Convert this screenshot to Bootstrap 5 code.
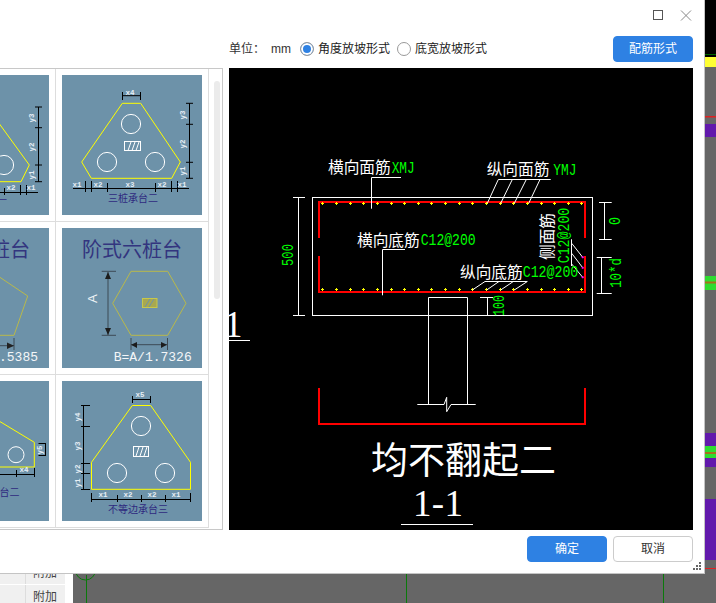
<!DOCTYPE html>
<html lang="zh">
<head>
<meta charset="utf-8">
<title>配筋形式</title>
<link rel="stylesheet" href="https://cdn.jsdelivr.net/npm/bootstrap@5.3.0/dist/css/bootstrap.min.css">
<style>
html,body{width:716px;height:603px;margin:0;overflow:hidden;background:#666}
body{font-family:"Liberation Sans","Noto Sans CJK SC",sans-serif;font-size:12px;color:#333}
.desk{width:716px;height:603px;position:relative}
.side{width:65px;padding-top:561px;background:#f0f0f0;flex:none}
.side-row{height:24px}
.side-row:first-child{height:24px;border-bottom:1px solid #fff}
.side-name{width:26px;border-right:1px solid #ddd}
.side-val{flex:1;text-align:right;padding-right:8px;line-height:24px;color:#444}
.side-gap{width:8px;background:#fff;flex:none}
.canvas-bg{display:block;flex:none}
.win{position:absolute;left:0;top:0;width:705px;height:574px;background:#fff;border-right:1px solid #c4c4c4;border-bottom:1px solid #c4c4c4}
.win-top{height:36px;padding:10px 12px 0 0;gap:16px;flex:none}
.win-tools{height:26px;margin-bottom:6px;padding-left:229px;padding-right:11px;flex:none}
.unit-label{width:42px}
.unit-val{width:29px}
.radio-dot.form-check-input{width:14px;height:14px;margin:0 4px 0 0;flex:none;border-color:#999}
.radio-dot.form-check-input:checked{background-color:#2e81e3;border-color:#999;--bs-form-check-bg-image:none;box-shadow:inset 0 0 0 2px #fff}
.radio-item{margin-right:7px;margin-top:-1px;color:#222}
.btn.act-btn{width:80px;height:26px;padding:0;font-size:12px;border-radius:4px;background:#2e81e3;border:1px solid #2e81e3;color:#fff}
.btn.plain-btn{width:80px;height:26px;padding:0;font-size:12px;border-radius:4px;background:#fff;border:1px solid #ccc;color:#333}
.win-main{height:462px;gap:6px;padding-right:11px;flex:none}
.pick{width:223px;height:462px;border:1px solid #c8c8c8;border-left:0;flex:none;overflow:hidden}
.pick-view{width:209px;overflow:hidden;flex:none;height:460px}
.pick-grid{display:grid;grid-template-columns:153px 153px;margin-left:-97px;width:306px}
.pick-cell{height:153px;padding:6px;border-right:1px solid #ddd;border-bottom:1px solid #ddd}
.pick-cell svg{display:block;width:140px;height:140px;background:#6d92a9}
.pick-track{flex:1;padding:12px 2px 0 5px}
.pick-thumb{height:218px;background:#ebebeb;border-radius:3px;width:6px}
.cad{display:block;width:464px;height:462px;background:#000;flex:none}
.win-foot{height:43px;padding:6px 11px 0 0;gap:6px;position:relative;flex:none}
.grip{position:absolute;right:3px;bottom:3px;display:block}
.dim{stroke:#000;stroke-width:1;fill:none}
.yel{stroke:#ff0;stroke-width:1;fill:none}
.wh{stroke:#fff;stroke-width:1;fill:none}
.lbl{font-family:"Liberation Mono",monospace;font-size:7.5px;font-weight:700;fill:#e6eef5;text-anchor:middle}
.tname{font-family:"Noto Sans CJK SC",sans-serif;font-size:10px;fill:#2f2a80}
.tbig{font-family:"Noto Sans CJK SC",sans-serif;font-size:20px;fill:#33357f}
.tformula{font-family:"Liberation Mono",monospace;font-size:13px;fill:#f4f6f8}
.cn{font-family:"Noto Sans CJK SC",sans-serif;font-size:15.7px;fill:#fff}
.gr{font-family:"Liberation Mono",monospace;font-size:16px;fill:#0f0}
.cl{stroke:#fff;stroke-width:1;fill:none}
.re{stroke:#f00;stroke-width:2;fill:none}
</style>
</head>
<body>
<div class="desk d-flex">
  <div class="side">
    <div class="side-row d-flex"><div class="side-name"></div><div class="side-val">附加</div></div>
    <div class="side-row d-flex"><div class="side-name"></div><div class="side-val">附加</div></div>
  </div>
  <div class="side-gap"></div>
  <svg class="canvas-bg" width="643" height="603" viewBox="73 0 643 603">
    <rect x="73" y="0" width="643" height="603" fill="#666"/>
    <rect x="705" y="0" width="11" height="54" fill="#000"/>
    <rect x="705" y="54" width="11" height="1" fill="#060"/>
    <rect x="705" y="55" width="11" height="2" fill="#000"/>
    <rect x="705" y="57" width="11" height="10" fill="#ff3"/>
    <rect x="705" y="116" width="11" height="1.5" fill="#e02020"/>
    <rect x="705" y="124" width="11" height="13" fill="#6219ac"/>
    <rect x="705" y="276" width="11" height="14" fill="#2fdc30"/>
    <rect x="705" y="281.5" width="11" height="2" fill="#a8701c"/>
    <rect x="705" y="433" width="11" height="13" fill="#6219ac"/>
    <rect x="705" y="446" width="11" height="12" fill="#2fdc30"/>
    <rect x="705" y="452" width="11" height="2" fill="#a8701c"/>
    <rect x="705" y="458" width="11" height="9" fill="#6219ac"/>
    <rect x="705" y="499" width="11" height="61" fill="#6219ac"/>
    <rect x="705" y="568" width="11" height="1" fill="#e02020"/>
    <path d="M406.5 560V603M663.5 560V603M86.5 575V603" stroke="#0a7a0a" fill="none"/>
    <path d="M75.500 570a10 10 0 0 0 20 0" stroke="#0a7a0a" fill="none"/>
  </svg>

  <div class="win d-flex flex-column">
    <div class="win-top d-flex justify-content-end align-items-start">
      <svg width="11" height="11" viewBox="0 0 11 11" aria-label="最大化"><rect x=".5" y=".5" width="9" height="9" fill="none" stroke="#555"/></svg>
      <svg width="12" height="11" viewBox="0 0 12 11" aria-label="关闭"><path d="M1 .5 11 10.500M11 .5 1 10.500" fill="none" stroke="#888"/></svg>
    </div>
    <div class="win-tools d-flex align-items-center">
      <span class="unit-label">单位：</span>
      <span class="unit-val">mm</span>
      <label class="radio-item d-flex align-items-center"><input class="form-check-input radio-dot" type="radio" name="slope" checked>角度放坡形式</label>
      <label class="radio-item d-flex align-items-center"><input class="form-check-input radio-dot" type="radio" name="slope">底宽放坡形式</label>
      <button class="btn act-btn ms-auto" type="button">配筋形式</button>
    </div>
    <div class="win-main d-flex">
      <div class="pick d-flex">
        <div class="pick-view">
          <div class="pick-grid">
            <div class="pick-cell">
              <svg viewBox="0 0 140 140"><g transform="translate(91,-75)">
                <path class="yel" d="M-1 123.300 29.300 165 21 181.700H-1"/>
                <circle class="wh" cx="4" cy="165" r="9.600"/>
                <path class="dim" d="M38.500 107V181.700M35 107H42M35 127.700H42M35 165H42M35 181.700H42M-1 192.500H38M4.500 188V195M20.500 185V195M26.500 185V195"/>
                <text class="lbl" transform="translate(34,118) rotate(-90)">y3</text>
                <text class="lbl" transform="translate(34,147) rotate(-90)">y2</text>
                <text class="lbl" transform="translate(34,175) rotate(-90)">y1</text>
                <text class="lbl" x="11" y="190">x2</text><text class="lbl" x="31" y="190">x1</text>
                <text class="tname" x="7" y="204" text-anchor="end">三桩承台一</text>
              </g></svg>
            </div>
            <div class="pick-cell">
              <svg viewBox="0 0 140 140"><g transform="translate(-62,-75)">
                <path class="yel" d="M122.300 103.300H140.700L180.300 162 171.700 178.300H91.300L81.700 162Z"/>
                <circle class="wh" cx="131" cy="124" r="9.600"/><circle class="wh" cx="107" cy="162" r="9.600"/><circle class="wh" cx="155" cy="162" r="9.600"/>
                <rect class="wh" x="124.500" y="141.500" width="16" height="9"/>
                <path class="wh" d="M128 150.500 131 142M132 150.500 135 142M136 150.500 139 142"/>
                <path class="dim" d="M122.500 95.700H140.500M122.500 92V100M140.500 92V100M189.500 103.300V178.300M186 103.300H193M186 124.300H193M186 162.300H193M186 178.300H193M73 188.500H189M85.500 181V192M91.500 181V192M107.500 183V192M155.500 183V192M171.500 181V192M177.500 181V192"/>
                <text class="lbl" x="130" y="95">x4</text>
                <text class="lbl" transform="translate(185,115) rotate(-90)">y3</text>
                <text class="lbl" transform="translate(185,144) rotate(-90)">y2</text>
                <text class="lbl" transform="translate(185,171) rotate(-90)">y1</text>
                <text class="lbl" x="77" y="187">x1</text><text class="lbl" x="98" y="187">x2</text><text class="lbl" x="130" y="187">x3</text><text class="lbl" x="162" y="187">x2</text><text class="lbl" x="182" y="187">x1</text>
                <text class="tname" x="133" y="202" text-anchor="middle">三桩承台二</text>
              </g></svg>
            </div>
            <div class="pick-cell">
              <svg viewBox="0 0 140 140"><g transform="translate(91,-228)">
                <text class="tbig" x="30" y="257" text-anchor="end">阶式五桩台</text>
                <path d="M-1 276.700 27.700 296 14 335.300H-1" fill="none" stroke="#b9b94a"/>
                <path d="M-1 345.700H14M14 338V350" fill="none" stroke="#3d4a55"/>
                <path d="M7 342.500 14 345.700 7 349Z" fill="#222"/>
                <text class="tformula" x="38" y="360.700" text-anchor="end">B=A/1.5385</text>
              </g></svg>
            </div>
            <div class="pick-cell">
              <svg viewBox="0 0 140 140"><g transform="translate(-62,-228)">
                <text class="tbig" x="132" y="257" text-anchor="middle">阶式六桩台</text>
                <path d="M131 271.300H167.700L186 303.300 167.700 335.300H131L112.700 303.300Z" fill="none" stroke="#b9b94a"/>
                <rect x="142.500" y="298.500" width="14.500" height="9" fill="#a8a850" stroke="#c8c84a"/>
                <path d="M145 307 150 299M149 307 154 299" stroke="#6d92a9"/>
                <path d="M108 272V335M101.700 271.300H116M101.700 335.300H116M131 338V350M167.500 338V350M131 344.700H167" fill="none" stroke="#3d4a55"/>
                <path d="M108 272 105 279H111ZM108 335 105 328H111ZM131 344.700 137 342V348ZM167 344.700 161 342V348Z" fill="#1c1c1c"/>
                <text font-family="Liberation Sans" font-size="13" fill="#eef2f5" transform="translate(97,303) rotate(-90)">A</text>
                <text class="tformula" x="152.700" y="360.700" text-anchor="middle">B=A/1.7326</text>
              </g></svg>
            </div>
            <div class="pick-cell">
              <svg viewBox="0 0 140 140"><g transform="translate(91,-381)">
                <path class="yel" d="M-1 421 34.300 442.300V467H-1"/>
                <circle class="wh" cx="16" cy="454.700" r="8"/>
                <path class="dim" d="M45.500 443.300V455.700M38.500 443.500H46M38.500 455.500H46M-1 474.500H34.500M16.500 470V477M34.500 468V477"/>
                <text class="lbl" transform="translate(42,450) rotate(-90)">y5</text>
                <text class="lbl" x="24" y="472">x4</text>
                <text class="tname" x="19.500" y="495.500" text-anchor="end">不等边承台二</text>
              </g></svg>
            </div>
            <div class="pick-cell">
              <svg viewBox="0 0 140 140"><g transform="translate(-62,-381)">
                <path class="yel" d="M132.300 405.500H150.700L190.500 462.300V489.300H91.500V462.300Z"/>
                <circle class="wh" cx="141" cy="426" r="9.600"/><circle class="wh" cx="117" cy="473" r="9.600"/><circle class="wh" cx="165" cy="473" r="9.600"/>
                <rect class="wh" x="133.500" y="446.500" width="15" height="10"/>
                <path class="wh" d="M136 456 139 447M140 456 143 447M144 456 147 447"/>
                <path class="dim" d="M132.500 399.500H150.500M132.500 396V403M150.500 396V403M83.500 405V489M81 405.500H90M81 426.500H90M81 463.500H90M81 473.500H90M81 489.500H90M91.500 499.500H190.500M91.500 493V502M117.500 495V502M141.500 495V502M165.500 495V502M190.500 493V502"/>
                <text class="lbl" x="140" y="397">x5</text>
                <text class="lbl" transform="translate(80,417) rotate(-90)">y4</text>
                <text class="lbl" transform="translate(80,446) rotate(-90)">y3</text>
                <text class="lbl" transform="translate(80,469) rotate(-90)">y2</text>
                <text class="lbl" transform="translate(80,483) rotate(-90)">y1</text>
                <text class="lbl" x="103" y="497">x1</text><text class="lbl" x="128" y="497">x2</text><text class="lbl" x="152" y="497">x2</text><text class="lbl" x="176" y="497">x1</text>
                <text class="tname" x="138" y="513" text-anchor="middle">不等边承台三</text>
              </g></svg>
            </div>
          </div>
        </div>
        <div class="pick-track"><div class="pick-thumb"></div></div>
      </div>

      <svg class="cad" viewBox="229 68 464 462">
        <defs>
          <path id="dotrow" transform="translate(.2,.2)" stroke-linecap="square" d="M321.300 203.300h2M322.300 202.300v2M335.300 203.300h2M336.300 202.300v2M349.300 203.300h2M350.300 202.300v2M362.300 203.300h2M363.300 202.300v2M376.300 203.300h2M377.300 202.300v2M390.300 203.300h2M391.300 202.300v2M403.300 203.300h2M404.300 202.300v2M417.300 203.300h2M418.300 202.300v2M430.300 203.300h2M431.300 202.300v2M444.300 203.300h2M445.300 202.300v2M458.300 203.300h2M459.300 202.300v2M471.300 203.300h2M472.300 202.300v2M485.300 203.300h2M486.300 202.300v2M499.300 203.300h2M500.300 202.300v2M512.300 203.300h2M513.300 202.300v2M526.300 203.300h2M527.300 202.300v2M540.300 203.300h2M541.300 202.300v2M553.300 203.300h2M554.300 202.300v2M567.300 203.300h2M568.300 202.300v2M580.300 203.300h2M581.300 202.300v2" stroke="#ff0" fill="none"/>
        </defs>
        <rect class="cl" x="312.500" y="197.500" width="280" height="118"/>
        <path class="re" d="M319 238V202H585V238M319 256V292H585V256"/>
        <use href="#dotrow"/><use href="#dotrow" y="86"/>
        <path class="cl" d="M428.500 315.500V297.500H467.500V404.500M428.500 315.500V404.500M417.300 404.500H444L446.700 397.300V411.700L451 404.500H475.700"/>
        <path class="re" d="M319 388V424H585V388"/>
        <!-- 尺寸 -->
        <path class="cl" d="M298.500 197V315M293 197.500H305M293 315.500H305M604.500 202V239M599 202.500H611.700M599 239.500H611.700M601.500 257V293M596.700 257.500H611.700M596.700 293.500H611.700M487.500 297V315M480 297.500H493M480 315.500H493"/>
        <text class="gr" transform="translate(293.300,266) rotate(-90)" textLength="22" lengthAdjust="spacingAndGlyphs">500</text>
        <text class="gr" transform="translate(620,225) rotate(-90)" textLength="8" lengthAdjust="spacingAndGlyphs">0</text>
        <text class="gr" transform="translate(620.700,288) rotate(-90)" textLength="30" lengthAdjust="spacingAndGlyphs">10*d</text>
        <text class="gr" transform="translate(504,316) rotate(-90)" textLength="21" lengthAdjust="spacingAndGlyphs">100</text>
        <!-- 引线 -->
        <path class="cl" d="M401 177.500H371.500V208.700M405 249.500H382.500V295.300M498.300 179.500H550.700M498.300 179.500 487.300 203.300M512.300 179.500 500.700 203.300M526.300 179.500 514.300 203.300M540 179.500 528.700 203.300M485 281.500H527.300M485 281.500 472.300 290M499 281.500 486.700 290M513.300 281.500 500.700 290M527.300 281.500 514.300 290M571.500 239.300V266M571.700 243.300 582.700 257.300M571.700 253.300 582.700 267.700M571.700 264 582.700 277.300"/>
        <path d="M581.700 257.300h2M582.700 256.300v2M581.700 267.700h2M582.700 266.700v2M581.700 277.300h2M582.700 276.300v2" stroke="#f0f" stroke-width="1.500" fill="none"/>
        <!-- 文字 -->
        <text class="cn" x="328" y="172.500">横向面筋</text><text class="gr" x="391.700" y="173.300" textLength="23" lengthAdjust="spacingAndGlyphs">XMJ</text>
        <text class="cn" x="357" y="245.500">横向底筋</text><text class="gr" x="420.700" y="245.300" textLength="55" lengthAdjust="spacingAndGlyphs">C12@200</text>
        <text class="cn" x="486.700" y="175">纵向面筋</text><text class="gr" x="553.300" y="175.300" textLength="23" lengthAdjust="spacingAndGlyphs">YMJ</text>
        <text class="cn" x="460" y="277.500">纵向底筋</text><text class="gr" x="522.700" y="276.700" textLength="55.600" lengthAdjust="spacingAndGlyphs">C12@200</text>
        <text class="cn" transform="translate(553,260) rotate(-90)">侧面筋</text>
        <text class="gr" transform="translate(569,263.300) rotate(-90)" textLength="55.600" lengthAdjust="spacingAndGlyphs">C12@200</text>
        <text font-family="Liberation Serif" font-size="37" fill="#fff" x="224" y="337">1</text>
        <path class="cl" d="M229 340.500H250"/>
        <text font-family="Noto Sans CJK SC" font-size="37" fill="#fff" x="371" y="474">均不翻起二</text>
        <text font-family="Liberation Serif" font-size="37" fill="#fff" x="413" y="516" textLength="50">1-1</text>
        <path class="cl" d="M401 524.500H473"/>
      </svg>
    </div>
    <div class="win-foot d-flex justify-content-end">
      <button class="btn act-btn" type="button">确定</button>
      <button class="btn plain-btn" type="button">取消</button>
      <svg class="grip" width="8" height="8" viewBox="0 0 8 8" fill="#666"><rect x="6" y="0" width="2" height="2"/><rect x="3" y="3" width="2" height="2"/><rect x="6" y="3" width="2" height="2"/><rect x="0" y="6" width="2" height="2"/><rect x="3" y="6" width="2" height="2"/><rect x="6" y="6" width="2" height="2"/></svg>
    </div>
  </div>
</div>
<script src="https://cdn.jsdelivr.net/npm/bootstrap@5.3.0/dist/js/bootstrap.bundle.min.js"></script>
</body>
</html>
